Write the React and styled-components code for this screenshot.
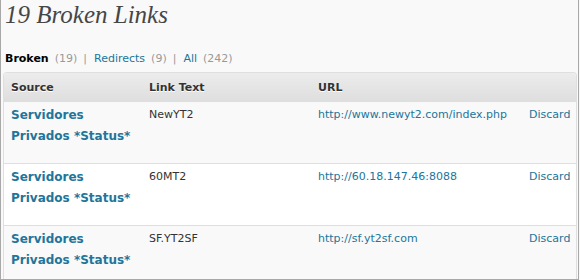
import React from "react";
import styled, { createGlobalStyle } from "styled-components";

const Global = createGlobalStyle`
  html, body { margin: 0; padding: 0; background: #f9f9f9; }
  body { font-family: "DejaVu Sans", Verdana, sans-serif; }
`;

const Frame = styled.div`
  box-sizing: border-box;
  width: 579px;
  height: 280px;
  overflow: hidden;
  background: #f9f9f9;
  border-left: 1px solid #a8a8a8;
  border-right: 1px solid #a8a8a8;
  border-bottom: 1px solid #a8a8a8;
  padding: 0 2px 0 2px;
`;

const Title = styled.h2`
  margin: 0;
  padding: 1px 0 0 2px;
  height: 43px;
  font-family: "Liberation Serif", "Times New Roman", serif;
  font-style: italic;
  font-weight: normal;
  font-size: 25px;
  line-height: 28px;
  color: #464646;
`;

const Filters = styled.ul`
  list-style: none;
  margin: 0;
  padding: 0 0 0 2px;
  display: flex;
  height: 28px;
  align-items: center;
  font-size: 11px;
  color: #999;
`;

const FilterItem = styled.li`
  display: flex;
  gap: 6px;
  margin-right: 7px;
`;

const FilterLink = styled.a`
  color: ${(p) => (p.$current ? "#000" : "#21759b")};
  font-weight: ${(p) => (p.$current ? "bold" : "normal")};
  text-decoration: none;
`;

const Count = styled.span`
  color: #999;
`;

const Sep = styled.span`
  color: #999;
`;

const Table = styled.table`
  width: 574px;
  border-collapse: separate;
  border-spacing: 0;
  border: 1px solid #dfdfdf;
  border-bottom: none;
  border-radius: 4px 4px 0 0;
  font-size: 11px;
  table-layout: fixed;
`;

const Th = styled.th`
  text-align: left;
  font-weight: bold;
  color: #333;
  text-shadow: 0 1px 0 #fff;
  height: 28px;
  padding: 0 7px;
  background: linear-gradient(#ececec, #dedede);
  border-bottom: 1px solid #dfdfdf;
  &:first-child { border-top-left-radius: 4px; }
  &:last-child { border-top-right-radius: 4px; }
`;

const Tr = styled.tr`
  background: ${(p) => (p.$alt ? "#fff" : "#f9f9f9")};
`;

const Td = styled.td`
  vertical-align: top;
  height: 47px;
  padding: 3px 7px 11px 7px;
  border-bottom: 1px solid #dfdfdf;
  color: #333;
  line-height: 20px;
`;

const SourceLink = styled.a`
  color: #21759b;
  font-weight: bold;
  font-size: 12px;
  text-decoration: none;
`;

const Link = styled.a`
  color: #21759b;
  text-decoration: none;
`;

const rows = [
  { text: "NewYT2", url: "http://www.newyt2.com/index.php" },
  { text: "60MT2", url: "http://60.18.147.46:8088" },
  { text: "SF.YT2SF", url: "http://sf.yt2sf.com" },
];

export default function App() {
  return (
    <>
      <Global />
      <Frame>
        <Title>19 Broken Links</Title>
        <Filters>
          <FilterItem>
            <FilterLink $current>Broken</FilterLink>
            <Count>(19)</Count>
            <Sep>|</Sep>
          </FilterItem>
          <FilterItem>
            <FilterLink>Redirects</FilterLink>
            <Count>(9)</Count>
            <Sep>|</Sep>
          </FilterItem>
          <FilterItem>
            <FilterLink>All</FilterLink>
            <Count>(242)</Count>
          </FilterItem>
        </Filters>
        <Table>
          <colgroup>
            <col style={{ width: 138 }} />
            <col style={{ width: 169 }} />
            <col style={{ width: 211 }} />
            <col />
          </colgroup>
          <thead>
            <tr>
              <Th>Source</Th>
              <Th>Link Text</Th>
              <Th>URL</Th>
              <Th></Th>
            </tr>
          </thead>
          <tbody>
            {rows.map((r, i) => (
              <Tr key={i} $alt={i % 2 === 1}>
                <Td>
                  <SourceLink>Servidores Privados *Status*</SourceLink>
                </Td>
                <Td>{r.text}</Td>
                <Td>
                  <Link>{r.url}</Link>
                </Td>
                <Td>
                  <Link>Discard</Link>
                </Td>
              </Tr>
            ))}
          </tbody>
        </Table>
      </Frame>
    </>
  );
}
